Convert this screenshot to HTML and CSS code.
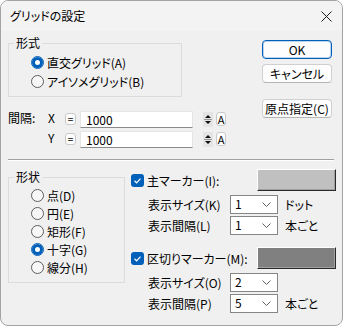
FILE: index.html
```html
<!DOCTYPE html>
<html lang="ja">
<head>
  <meta charset="UTF-8">
  <meta name="viewport" content="width=device-width, initial-scale=1.0">
  <title>グリッドの設定</title>
  <link rel="stylesheet" href="styles.css">
</head>
<body>
  <div class="window">
    <div class="titlebar">
      <span class="title">グリッドの設定</span>
      <svg class="close" width="11" height="11" viewBox="0 0 11 11"><path d="M0.5 0.5L10.5 10.5M10.5 0.5L0.5 10.5" stroke="#1b1b1b" stroke-width="1"/></svg>
    </div>
    <div class="content">
      <div class="top">
        <div class="top-left">
          <fieldset class="group kind">
            <legend>形式</legend>
            <label class="opt"><span class="radio on"></span>直交グリッド(A)</label>
            <label class="opt"><span class="radio"></span>アイソメグリッド(B)</label>
          </fieldset>
          <div class="pitch">
            <div class="pitch-row">
              <span class="pitch-title">間隔:</span>
              <span class="axis">X</span>
              <span class="eq">=</span>
              <span class="field">1000</span>
              <span class="spin">
                <svg width="10" height="15" viewBox="0 0 10 15"><path d="M5 3L8 6H2Z M2 9H8L5 12Z" fill="#111"/><path d="M1 7.5H9" stroke="#9a9a9a" stroke-width="1"/></svg>
              </span>
              <span class="abtn">A</span>
            </div>
            <div class="pitch-row">
              <span class="pitch-title"></span>
              <span class="axis">Y</span>
              <span class="eq">=</span>
              <span class="field">1000</span>
              <span class="spin">
                <svg width="10" height="15" viewBox="0 0 10 15"><path d="M5 3L8 6H2Z M2 9H8L5 12Z" fill="#111"/><path d="M1 7.5H9" stroke="#9a9a9a" stroke-width="1"/></svg>
              </span>
              <span class="abtn">A</span>
            </div>
          </div>
        </div>
        <div class="buttons">
          <button class="btn default">OK</button>
          <button class="btn cancel">キャンセル</button>
          <button class="btn origin">原点指定(C)</button>
        </div>
      </div>
      <hr class="sep">
      <div class="bottom">
        <fieldset class="group shape">
          <legend>形状</legend>
          <label class="opt"><span class="radio"></span>点(D)</label>
          <label class="opt"><span class="radio"></span>円(E)</label>
          <label class="opt"><span class="radio"></span>矩形(F)</label>
          <label class="opt"><span class="radio on"></span>十字(G)</label>
          <label class="opt"><span class="radio"></span>線分(H)</label>
        </fieldset>
        <div class="markers">
          <div class="marker-head">
            <span class="check"><svg width="13" height="13" viewBox="0 0 13 13"><path d="M3.5 6.8L5.6 8.8L9.5 4.6" fill="none" stroke="#fff" stroke-width="1.2"/></svg></span>
            <span class="marker-name">主マーカー(I):</span>
            <span class="swatch light"></span>
          </div>
          <div class="sub-row first">
            <span class="sub-label">表示サイズ(K)</span>
            <span class="combo"><span>1</span><svg width="9" height="5" viewBox="0 0 9 5"><path d="M0.5 0.5L4.5 4.5L8.5 0.5" fill="none" stroke="#606060"/></svg></span>
            <span class="unit">ドット</span>
          </div>
          <div class="sub-row">
            <span class="sub-label">表示間隔(L)</span>
            <span class="combo"><span>1</span><svg width="9" height="5" viewBox="0 0 9 5"><path d="M0.5 0.5L4.5 4.5L8.5 0.5" fill="none" stroke="#606060"/></svg></span>
            <span class="unit">本ごと</span>
          </div>
          <div class="marker-head second">
            <span class="check"><svg width="13" height="13" viewBox="0 0 13 13"><path d="M3.5 6.8L5.6 8.8L9.5 4.6" fill="none" stroke="#fff" stroke-width="1.2"/></svg></span>
            <span class="marker-name">区切りマーカー(M):</span>
            <span class="swatch dark"></span>
          </div>
          <div class="sub-row first">
            <span class="sub-label">表示サイズ(O)</span>
            <span class="combo"><span>2</span><svg width="9" height="5" viewBox="0 0 9 5"><path d="M0.5 0.5L4.5 4.5L8.5 0.5" fill="none" stroke="#606060"/></svg></span>
          </div>
          <div class="sub-row">
            <span class="sub-label">表示間隔(P)</span>
            <span class="combo"><span>5</span><svg width="9" height="5" viewBox="0 0 9 5"><path d="M0.5 0.5L4.5 4.5L8.5 0.5" fill="none" stroke="#606060"/></svg></span>
            <span class="unit">本ごと</span>
          </div>
        </div>
      </div>
    </div>
  </div>
</body>
</html>
```

FILE: styles.css
```css
body {
  margin: 0;
  background-color: #fff;
  font-family: "Noto Sans CJK JP", "Noto Sans", sans-serif;
  font-size: 12px;
  font-feature-settings: "palt";
  color: #000;
}
.window {
  width: 343px;
  height: 326px;
  box-sizing: border-box;
  border: 1px solid #a3a3a3;
  border-radius: 8px;
  background-color: #f0f0f0;
  overflow: hidden;
}
.titlebar {
  height: 30px;
  display: flex;
  align-items: center;
  padding: 0 10px 0 9px;
  background-color: #f3f3f3;
}
.title {
  line-height: 14px;
}
.close {
  margin-left: auto;
}
.content {
  padding: 0 6px 0 7px;
}
.top {
  display: flex;
}
.top-left {
  display: flex;
  flex-direction: column;
}
.group {
  margin: 0;
  border: 1px solid #dcdcdc;
  min-width: 0;
  box-sizing: border-box;
}
.group legend {
  padding: 0 2px;
  line-height: 14px;
}
.kind {
  margin-top: 5px;
  width: 174px;
  padding: 3px 0 5px 5px;
}
.shape {
  margin-top: 9px;
  width: 117px;
  padding: 2px 0 6px 5px;
}
.opt {
  display: flex;
  align-items: center;
  gap: 3px;
  margin-left: 17px;
  height: 19px;
}
.shape .opt {
  height: 18px;
}
.radio {
  width: 13px;
  height: 13px;
  box-sizing: border-box;
  border: 1px solid #5e5e5e;
  border-radius: 50%;
  background-color: #f7f7f7;
}
.radio.on {
  border-color: #005fb8;
  background-color: #fff;
  box-shadow: inset 0 0 0 3px #005fb8;
}
.pitch {
  margin-top: 12px;
}
.pitch-row {
  display: flex;
  align-items: center;
  height: 20px;
}
.pitch-title {
  width: 40px;
  margin-top: -4px;
}
.axis {
  width: 17px;
  margin-top: -4px;
}
.eq {
  width: 11px;
  height: 12px;
  box-sizing: border-box;
  border: 1px solid #c8c8c8;
  border-radius: 3px;
  background-color: #fdfdfd;
  font-size: 10px;
  line-height: 10px;
  text-align: center;
  margin-right: 4px;
}
.field {
  width: 113px;
  height: 17px;
  box-sizing: border-box;
  background-color: #fff;
  border: 1px solid #e5e5e5;
  border-bottom-color: #8a8a8a;
  padding-left: 5px;
  line-height: 15px;
}
.spin {
  margin-left: 10px;
  width: 10px;
  height: 15px;
  background-color: #e4e4e4;
  display: flex;
}
.abtn {
  margin-left: 3px;
  width: 10px;
  height: 14px;
  box-sizing: border-box;
  border: 1px solid #c8c8c8;
  border-radius: 3px;
  background-color: #fdfdfd;
  font-size: 11px;
  line-height: 12px;
  text-align: center;
}
.buttons {
  margin-left: auto;
  margin-right: 4px;
  display: flex;
  flex-direction: column;
  width: 70px;
}
.btn {
  height: 19px;
  padding: 0;
  font-family: inherit;
  font-size: 12px;
  font-feature-settings: "palt";
  color: #000;
  background-color: #fdfdfd;
  border: 1px solid #d0d0d0;
  border-bottom-color: #b5b5b5;
  border-radius: 4px;
  line-height: 15px;
}
.btn.default {
  margin-top: 9px;
  border-color: #005fb8;
  box-shadow: inset 0 0 0 1px rgba(0, 95, 184, 0.25);
}
.btn.cancel {
  margin-top: 5px;
}
.btn.origin {
  margin-top: 16px;
}
.sep {
  margin: 10px 2px 0 0;
  height: 0;
  border: 0;
  border-top: 1px solid #a0a0a0;
  border-bottom: 1px solid #fff;
}
.bottom {
  display: flex;
  align-items: flex-start;
}
.markers {
  flex: 1;
  margin-left: 6px;
  margin-top: 8px;
}
.marker-head {
  display: flex;
  align-items: center;
  height: 22px;
}
.marker-head.second {
  margin-top: 11px;
}
.check {
  width: 13px;
  height: 13px;
  border-radius: 3px;
  background-color: #005fb8;
  display: flex;
}
.marker-name {
  margin-left: 3px;
}
.swatch {
  margin-left: auto;
  width: 79px;
  height: 22px;
  box-sizing: border-box;
  border-top: 1px solid #fff;
  border-left: 1px solid #fff;
  border-right: 1px solid #2a2a2a;
  border-bottom: 1px solid #2a2a2a;
  box-shadow: inset -1px -1px 0 #a0a0a0;
}
.swatch.light {
  background-color: #c0c0c0;
}
.swatch.dark {
  background-color: #808080;
}
.sub-row {
  display: flex;
  align-items: center;
  height: 21px;
  padding-left: 17px;
}
.sub-row.first {
  margin-top: 3px;
}
.sub-label {
  width: 82px;
}
.combo {
  width: 48px;
  height: 19px;
  box-sizing: border-box;
  border: 1px solid #858585;
  background-color: #fff;
  display: flex;
  align-items: center;
  justify-content: space-between;
  padding: 0 6px 0 4px;
  line-height: 15px;
}
.combo span {
  margin-top: -3px;
}
.unit {
  margin-left: 7px;
}
```
